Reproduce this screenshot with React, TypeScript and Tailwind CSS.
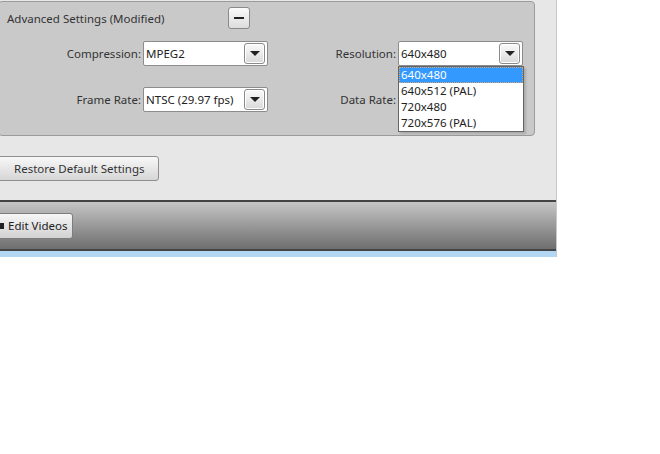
import { ReactNode } from 'react';

const font = { fontFamily: '"Segoe UI", "Noto Sans", "Open Sans", sans-serif' };

function ArrowBtn() {
  return (
    <div className="w-[21px] h-[21px] rounded-[3px] border border-[#8a8a8a] bg-gradient-to-b from-[#fbfbfb] to-[#d9d9d9] flex items-center justify-center shadow-[inset_0_0_0_1px_#ffffff]">
      <div className="w-0 h-0 border-l-[5px] border-r-[5px] border-t-[5px] border-l-transparent border-r-transparent border-t-[#222]" />
    </div>
  );
}

function Select({ value, h = 25 }: { value: string; h?: number }) {
  return (
    <div
      className="w-[125px] bg-white border border-[#8c8c8c] rounded-[2px] flex items-center justify-between pl-[2px] pr-[2px]"
      style={{ height: h }}
    >
      <span className="text-[11.5px] text-[#222]">{value}</span>
      <ArrowBtn />
    </div>
  );
}

function Field({ label, labelW, children }: { label: string; labelW: number; children: ReactNode }) {
  return (
    <div className="flex items-center">
      <span className="text-[11.5px] text-[#333] text-right pr-[2px]" style={{ width: labelW }}>
        {label}
      </span>
      {children}
    </div>
  );
}

export default function App() {
  return (
    <div className="w-[660px] h-[454px] bg-white overflow-hidden" style={font}>
      <div className="w-[557px] h-[251px] bg-[#e7e7e7] border-r border-[#c9c9c9] flex flex-col">
        {/* advanced settings panel */}
        <div className="relative w-[537px] h-[135px] mt-[1px] ml-[-2px] bg-[#c9c9c9] border border-[#9b9b9b] rounded-[4px]">
          <div className="flex items-center h-[34px] pl-[8px]">
            <span className="text-[11.5px] text-[#333] w-[221px]">Advanced Settings (Modified)</span>
            <div className="w-[22px] h-[22px] mt-[-2px] rounded-[3px] border border-[#8a8a8a] bg-gradient-to-b from-[#fbfbfb] to-[#dcdcdc] flex items-center justify-center">
              <div className="w-[10px] h-[2px] bg-[#222]" />
            </div>
          </div>
          <div className="flex items-center mt-[5px]">
            <Field label="Compression:" labelW={144}>
              <Select value="MPEG2" />
            </Field>
            <Field label="Resolution:" labelW={130}>
              <Select value="640x480" />
            </Field>
          </div>
          <div className="flex items-center mt-[21px]">
            <Field label="Frame Rate:" labelW={144}>
              <Select value="NTSC (29.97 fps)" />
            </Field>
            <Field label="Data Rate:" labelW={130}>
              <div className="w-[125px] h-[25px]" />
            </Field>
          </div>

          {/* open dropdown list */}
          <div className="absolute left-[399px] top-[64px] w-[126px] bg-white border border-[#646464] text-[11.5px] text-[#222] leading-[16px] shadow-[2px_2px_2px_rgba(0,0,0,0.15)]">
            <div className="bg-[#3399ff] text-white pl-[2px] outline outline-1 outline-dotted outline-[#d9a36b] -outline-offset-1">640x480</div>
            <div className="pl-[2px]">640x512 (PAL)</div>
            <div className="pl-[2px]">720x480</div>
            <div className="pl-[2px]">720x576 (PAL)</div>
          </div>
        </div>

        <div className="flex-1 pt-[19px]">
          <button className="ml-[-3px] h-[25px] pl-[16px] pr-[13px] rounded-[3px] border border-[#8f8f8f] bg-gradient-to-b from-[#f8f8f8] to-[#d6d6d6] text-[11.5px] text-[#333]">
            Restore Default Settings
          </button>
        </div>

        {/* bottom toolbar */}
        <div className="h-[51px] border-t-2 border-b-2 border-[#444] bg-gradient-to-b from-[#c6c6c6] to-[#6f6f6f] flex items-center">
          <button className="ml-[-6px] h-[26px] pl-[5px] pr-[5px] rounded-[3px] border border-[#7d7d7d] bg-gradient-to-b from-[#f6f6f6] to-[#d2d2d2] text-[11.5px] text-[#222] flex items-center gap-[4px]">
            <span className="w-[4px] h-[6px] bg-[#222]" />
            Edit Videos
          </button>
        </div>
      </div>
      <div className="w-[557px] h-[6px] bg-[#b3d6f2] border-r border-[#c9c9c9]" />
    </div>
  );
}
